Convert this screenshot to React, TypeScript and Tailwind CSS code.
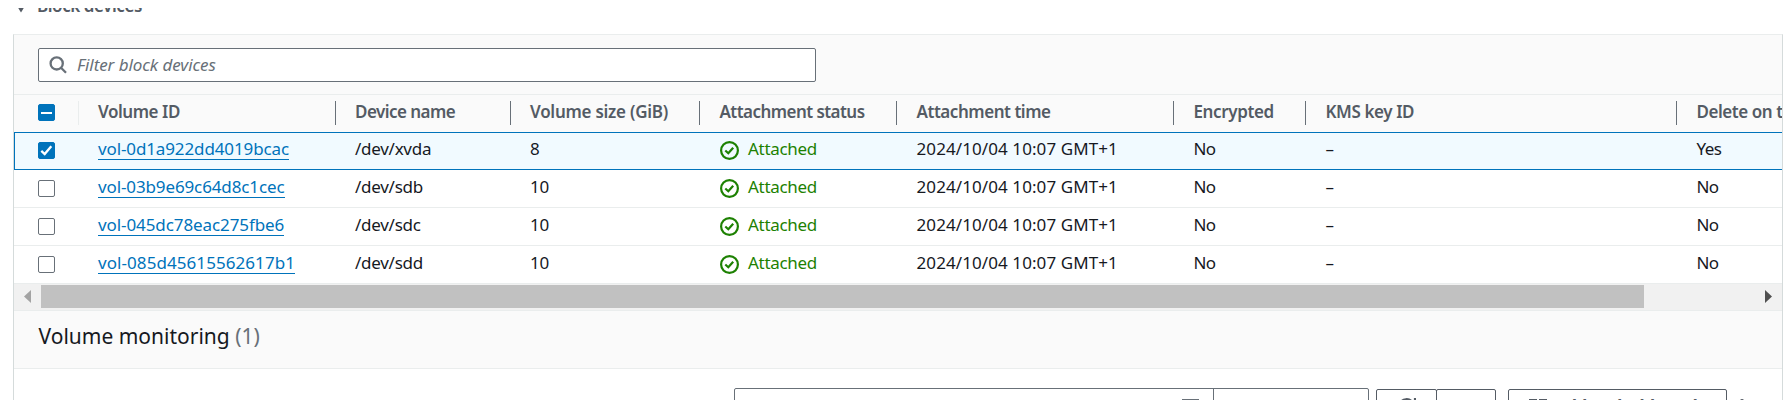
import type { ReactNode } from 'react';

const volumes = [
  { id: 'vol-0d1a922dd4019bcac', device: '/dev/xvda', size: '8', remove: 'Yes', checked: true, tracking: 'tracking-[-0.12px]' },
  { id: 'vol-03b9e69c64d8c1cec', device: '/dev/sdb', size: '10', remove: 'No', checked: false, tracking: 'tracking-[-0.12px]' },
  { id: 'vol-045dc78eac275fbe6', device: '/dev/sdc', size: '10', remove: 'No', checked: false, tracking: 'tracking-[-0.09px]' },
  { id: 'vol-085d45615562617b1', device: '/dev/sdd', size: '10', remove: 'No', checked: false, tracking: 'tracking-[0.07px]' },
];

const grid =
  'grid grid-cols-[65px_257px_175px_189px_197px_277px_132px_371px_200px] w-[1863px]';

function HeaderCell({ children, last = false, tracking }: { children?: ReactNode; last?: boolean; tracking: string }) {
  return (
    <div className={`flex h-6 items-center pb-[2px] pl-[19.5px] whitespace-nowrap nth-[-n+4]:pl-[19px] ${last ? '' : 'border-r border-[#687078]'} ${tracking}`}>
      {children}
    </div>
  );
}

function Checkbox({ checked = false, mixed = false }: { checked?: boolean; mixed?: boolean }) {
  const on = checked || mixed;
  return (
    <div className={`flex size-[17px] items-center justify-center rounded-[2px] border ${on ? 'border-[#0073bb] bg-[#0073bb]' : 'border-[#687078] bg-white'}`}>
      {mixed && <div className="h-[2px] w-[11px] shrink-0 bg-white" />}
      {checked && (
        <svg width="15" height="15" viewBox="0 0 15 15" className="shrink-0" fill="none" stroke="white" strokeWidth="2.3">
          <path d="M2.3 7.8 5.7 11 12.3 3.2" />
        </svg>
      )}
    </div>
  );
}

function Cell({ children, className = '' }: { children: ReactNode; className?: string }) {
  return <div className={`pb-[3px] pl-[19.5px] whitespace-nowrap nth-[-n+4]:pl-[19px] ${className}`}>{children}</div>;
}

function Attached() {
  return (
    <div className="flex h-6 items-center gap-[9px] text-[#1d8102]">
      <svg width="19" height="19" viewBox="0 0 19 19" className="mt-[3px] ml-[0.5px]" fill="none" stroke="currentColor" strokeWidth="2.2">
        <circle cx="9.5" cy="9.5" r="8.4" />
        <path d="M5.3 9.5 8.3 12.2 13.2 6.7" />
      </svg>
      <span className="tracking-[-0.3px]">Attached</span>
    </div>
  );
}

export default function App() {
  return (
    <div className="h-[400px] w-[1783px] overflow-hidden bg-white font-['Noto_Sans',sans-serif] text-[17px] leading-6 text-[#16191f]">
      <div className="mt-2 h-[26px] overflow-hidden">
        <div className="-mt-[14px] flex items-center pl-[17px] font-semibold tracking-[-0.45px] text-[#545b64]">
          <svg width="8" height="7" viewBox="0 0 8 7" className="mt-[7px] mr-[12px]">
            <path d="M0 0H8L4 6.5Z" fill="currentColor" />
          </svg>
          Block devices
        </div>
      </div>

      <div className="ml-[13px] h-[366px] w-[1770px] overflow-hidden border-x border-t border-[#d5dbdb] border-t-[#eaeded]">
        <div className="h-[59px] bg-[#fafafa] pt-[13px] pl-6">
          <div className="flex h-[34px] w-[778px] items-center rounded-[2px] border border-[#687078] bg-white pl-[10px]">
            <svg width="18" height="18" viewBox="0 0 18 18" className="mr-[10px]" fill="none" stroke="#687078" strokeWidth="2.3">
              <circle cx="7.7" cy="7.4" r="6.1" />
              <path d="m12 11.8 5 5" />
            </svg>
            <span className="pb-px tracking-[-0.08px] text-[#687078] italic">Filter block devices</span>
          </div>
        </div>

        <div className="h-[38px] border-t border-[#eaeded] bg-[#fafafa] pt-[6px] font-semibold text-[#545b64]">
          <div className={grid}>
            <div className="flex h-6 items-center border-r border-[#eaeded] pb-px pl-6">
              <Checkbox mixed />
            </div>
            <HeaderCell tracking="tracking-[-0.45px]">Volume ID</HeaderCell>
            <HeaderCell tracking="tracking-[-0.55px]">Device name</HeaderCell>
            <HeaderCell tracking="tracking-[-0.26px]">Volume size (GiB)</HeaderCell>
            <HeaderCell tracking="tracking-[-0.55px]">Attachment status</HeaderCell>
            <HeaderCell tracking="tracking-[-0.46px]">Attachment time</HeaderCell>
            <HeaderCell tracking="tracking-[-0.38px]">Encrypted</HeaderCell>
            <HeaderCell tracking="tracking-[-0.4px]">KMS key ID</HeaderCell>
            <HeaderCell last tracking="tracking-[-0.45px]">Delete on termination</HeaderCell>
          </div>
        </div>

        {volumes.map((v) => (
          <div
            key={v.id}
            className={`h-[38px] overflow-hidden border-b ${v.checked ? 'border-t border-l border-[#0073bb] bg-[#f1faff]' : 'border-[#eaeded] bg-white pt-px pl-px'}`}
          >
            <div className={`${grid} -ml-px h-[35px] items-center`}>
              <div className="pl-6">
                <Checkbox checked={v.checked} />
              </div>
              <Cell>
                <span className={`inline-block h-[22px] border-b border-[#0073bb] text-[#0073bb] ${v.tracking}`}>
                  <span className="block h-[21px] leading-[22px]">{v.id}</span>
                </span>
              </Cell>
              <Cell className="tracking-[-0.27px]">{v.device}</Cell>
              <Cell className="tracking-[-0.3px]">{v.size}</Cell>
              <Cell><Attached /></Cell>
              <Cell className="tracking-[0.09px]">2024/10/04 10:07 GMT+1</Cell>
              <Cell className="tracking-[-0.6px]">No</Cell>
              <Cell>–</Cell>
              <Cell className="tracking-[-0.6px]">{v.remove}</Cell>
            </div>
          </div>
        ))}

        <div className="flex h-[26px] items-start bg-[#f1f1f1] pt-px">
          <div className="flex h-[23px] w-[27px] items-center pl-[10px]">
            <svg width="7" height="13" viewBox="0 0 7 13"><path d="M7 0V13L0 6.5Z" fill="#a3a3a3" /></svg>
          </div>
          <div className="h-[23px] w-[1603px] bg-[#c1c1c1]" />
          <div className="flex h-[23px] flex-1 items-center justify-end pr-[10px]">
            <svg width="7" height="13" viewBox="0 0 7 13"><path d="M0 0V13L7 6.5Z" fill="#505050" /></svg>
          </div>
        </div>

        <div className="h-[59px] border-y border-[#eaeded] bg-[#fafafa] pt-[11px] pl-[24.5px] text-[21px] leading-[28px]">
          Volume monitoring <span className="text-[#687078]">(1)</span>
        </div>

        <div className="flex items-start pt-[19px] pl-[720px] text-[#545b64]">
          <div className="flex h-[35px] w-[635px] rounded-[2px] border border-[#687078]">
            <div className="flex w-[479px] justify-end border-r border-[#687078] pt-[10px] pr-[14px]">
              <div className="h-[2px] w-[17px] bg-[#687078]" />
            </div>
          </div>
          <div className="mt-px ml-[7px] flex h-[34px] w-[61px] justify-center rounded-[2px] border border-[#545b64] pt-[8px]">
            <svg width="18" height="18" viewBox="0 0 18 18" fill="none" stroke="currentColor" strokeWidth="2.2">
              <path d="M16 10A7.5 7.5 0 1 1 14 3.5M17 0V6H11" />
            </svg>
          </div>
          <div className="mt-px -ml-px h-[34px] w-[60px] rounded-[2px] border border-[#545b64]" />
          <div className="mt-px ml-[12px] flex h-[34px] w-[219px] items-start rounded-[2px] border border-[#545b64] pl-5 font-bold">
            <svg width="18" height="18" viewBox="0 0 18 18" className="mt-[8px] mr-[8px]" fill="none" stroke="currentColor" strokeWidth="2">
              <path d="M1 2h6v6H1zM11 2h6v6h-6zM1 11h6v6H1zM11 11h6v6h-6z" />
            </svg>
            <span className="pt-[5px] tracking-[-0.5px] whitespace-nowrap">Add to dashboard</span>
          </div>
          <div className="mt-[11px] ml-[13px] size-[4px] rounded-full bg-[#545b64]" />
        </div>
      </div>
    </div>
  );
}
